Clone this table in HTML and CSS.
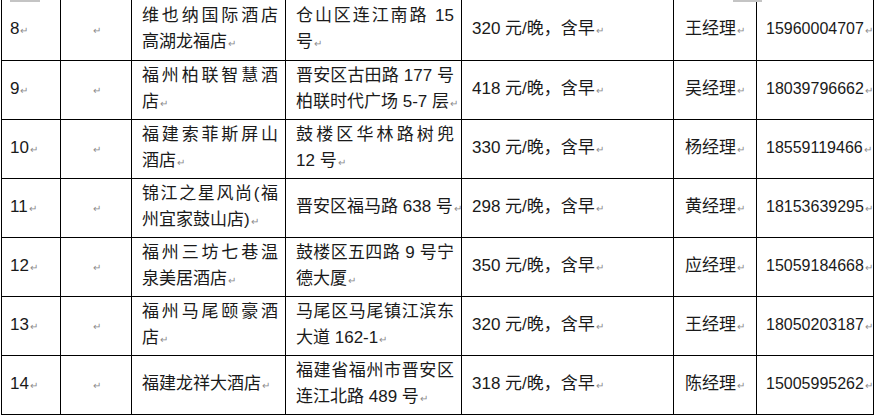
FILE: index.html
```html
<!DOCTYPE html>
<html lang="zh-CN">
<head>
<meta charset="utf-8">
<title>酒店列表</title>
<link rel="stylesheet" href="styles.css">
</head>
<body>
<div class="page">
  <div class="marker marker-a"></div>
  <div class="marker marker-b"></div>
  <table class="hotels">
    <colgroup>
      <col class="c-no"><col class="c-blank"><col class="c-name"><col class="c-addr"><col class="c-price"><col class="c-contact"><col class="c-phone">
    </colgroup>
    <tbody>
      <tr class="first">
        <td class="no">8<span class="pm">↵</span></td>
        <td class="blank"><span class="pm">↵</span></td>
        <td class="name"><span class="ln j">维也纳国际酒店</span><span class="ln">高湖龙福店<span class="pm">↵</span></span></td>
        <td class="addr"><span class="ln j">仓山区连江南路 15</span><span class="ln">号<span class="pm">↵</span></span></td>
        <td class="price">320 元/晚，含早<span class="pm">↵</span></td>
        <td class="contact">王经理<span class="pm">↵</span></td>
        <td class="phone">15960004707<span class="pm">↵</span></td>
      </tr>
      <tr>
        <td class="no">9<span class="pm">↵</span></td>
        <td class="blank"><span class="pm">↵</span></td>
        <td class="name"><span class="ln j">福州柏联智慧酒</span><span class="ln">店<span class="pm">↵</span></span></td>
        <td class="addr"><span class="ln j">晋安区古田路 177 号</span><span class="ln">柏联时代广场 5-7 层<span class="pm">↵</span></span></td>
        <td class="price">418 元/晚，含早<span class="pm">↵</span></td>
        <td class="contact">吴经理<span class="pm">↵</span></td>
        <td class="phone">18039796662<span class="pm">↵</span></td>
      </tr>
      <tr>
        <td class="no">10<span class="pm">↵</span></td>
        <td class="blank"><span class="pm">↵</span></td>
        <td class="name"><span class="ln j">福建索菲斯屏山</span><span class="ln">酒店<span class="pm">↵</span></span></td>
        <td class="addr"><span class="ln j">鼓楼区华林路树兜</span><span class="ln">12 号<span class="pm">↵</span></span></td>
        <td class="price">330 元/晚，含早<span class="pm">↵</span></td>
        <td class="contact">杨经理<span class="pm">↵</span></td>
        <td class="phone">18559119466<span class="pm">↵</span></td>
      </tr>
      <tr>
        <td class="no">11<span class="pm">↵</span></td>
        <td class="blank"><span class="pm">↵</span></td>
        <td class="name"><span class="ln j">锦江之星风尚(福</span><span class="ln">州宜家鼓山店)<span class="pm">↵</span></span></td>
        <td class="addr"><span class="ln">晋安区福马路 638 号<span class="pm">↵</span></span></td>
        <td class="price">298 元/晚，含早<span class="pm">↵</span></td>
        <td class="contact">黄经理<span class="pm">↵</span></td>
        <td class="phone">18153639295<span class="pm">↵</span></td>
      </tr>
      <tr>
        <td class="no">12<span class="pm">↵</span></td>
        <td class="blank"><span class="pm">↵</span></td>
        <td class="name"><span class="ln j">福州三坊七巷温</span><span class="ln">泉美居酒店<span class="pm">↵</span></span></td>
        <td class="addr"><span class="ln j">鼓楼区五四路 9 号宁</span><span class="ln">德大厦<span class="pm">↵</span></span></td>
        <td class="price">350 元/晚，含早<span class="pm">↵</span></td>
        <td class="contact">应经理<span class="pm">↵</span></td>
        <td class="phone">15059184668<span class="pm">↵</span></td>
      </tr>
      <tr>
        <td class="no">13<span class="pm">↵</span></td>
        <td class="blank"><span class="pm">↵</span></td>
        <td class="name"><span class="ln j">福州马尾颐豪酒</span><span class="ln">店<span class="pm">↵</span></span></td>
        <td class="addr"><span class="ln j">马尾区马尾镇江滨东</span><span class="ln">大道 162-1<span class="pm">↵</span></span></td>
        <td class="price">320 元/晚，含早<span class="pm">↵</span></td>
        <td class="contact">王经理<span class="pm">↵</span></td>
        <td class="phone">18050203187<span class="pm">↵</span></td>
      </tr>
      <tr>
        <td class="no">14<span class="pm">↵</span></td>
        <td class="blank"><span class="pm">↵</span></td>
        <td class="name"><span class="ln">福建龙祥大酒店<span class="pm">↵</span></span></td>
        <td class="addr"><span class="ln j">福建省福州市晋安区</span><span class="ln">连江北路 489 号<span class="pm">↵</span></span></td>
        <td class="price">318 元/晚，含早<span class="pm">↵</span></td>
        <td class="contact">陈经理<span class="pm">↵</span></td>
        <td class="phone">15005995262<span class="pm">↵</span></td>
      </tr>
    </tbody>
  </table>
</div>
</body>
</html>
```

FILE: styles.css
```css
html, body {
  margin: 0;
  padding: 0;
  background: #ffffff;
}

.page {
  position: relative;
  width: 877px;
  height: 417px;
  overflow: hidden;
  font-family: "Liberation Sans", "Noto Sans CJK SC", sans-serif;
  font-size: 17px;
  color: #1a1a1a;
}

.marker {
  position: absolute;
  top: 0;
  height: 2px;
  background: #c4c4c4;
}
.marker-a { left: 10px; width: 30px; }
.marker-b { left: 733px; width: 29px; }

.hotels {
  border-collapse: separate;
  border-spacing: 0;
  table-layout: fixed;
  width: 873px;
  margin-left: 1px;
}

.c-no { width: 60px; }
.c-blank { width: 71px; }
.c-name { width: 154px; }
.c-addr { width: 176px; }
.c-price { width: 212px; }
.c-contact { width: 83px; }
.c-phone { width: 117px; }

.hotels td {
  border-right: 1px solid #000;
  border-bottom: 1px solid #000;
  height: 59px;
  padding: 0 7px 0 10px;
  box-sizing: border-box;
  vertical-align: middle;
  line-height: 26px;
  white-space: nowrap;
}

.hotels tr.first td {
  height: 61px;
}

.hotels td.no {
  border-left: 1px solid #000;
  padding-left: 8px;
}
.hotels td.blank,
.hotels td.contact { text-align: center; padding: 0; }
.hotels td.phone {
  font-size: 16px;
  padding: 0 1px 0 9px;
}

.ln {
  display: block;
}
.ln.j {
  text-align: justify;
  text-align-last: justify;
}

.pm {
  color: #8c8c8c;
  font-size: 10px;
  margin-left: 1px;
}
```
